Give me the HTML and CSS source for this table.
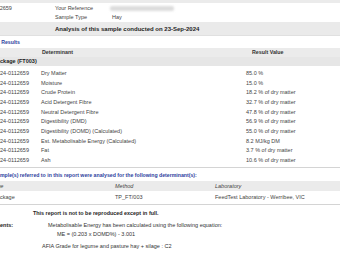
FILE: index.html
```html
<!DOCTYPE html>
<html lang="en">
<head>
<meta charset="utf-8">
<title>Analysis Report</title>
<link rel="stylesheet" href="styles.css">
</head>
<body>
<div class="page">
  <div class="topbar"></div>

  <div class="info">
    <div class="info-row">
      <span class="info-id">2024-0112659</span>
      <span class="info-label">Your Reference</span>
      <span class="info-value"><span class="redacted"></span></span>
    </div>
    <div class="info-row">
      <span class="info-id"></span>
      <span class="info-label">Sample Type</span>
      <span class="info-value">Hay</span>
    </div>
  </div>

  <div class="analysis-band">Analysis of this sample conducted on 23-Sep-2024</div>

  <div class="section-title"><span class="cut-test">Test Results</span></div>

  <table class="results">
    <thead>
      <tr class="head-row">
        <th class="col-id"></th>
        <th class="col-det">Determinant</th>
        <th class="col-val">Result Value</th>
      </tr>
    </thead>
    <tbody>
      <tr class="group-row"><td colspan="3"><span class="cut-pkg">Package (FT003)</span></td></tr>
      <tr><td class="col-id"><span class="cut-id">2024-0112659</span></td><td>Dry Matter</td><td>85.0 %</td></tr>
      <tr><td class="col-id"><span class="cut-id">2024-0112659</span></td><td>Moisture</td><td>15.0 %</td></tr>
      <tr><td class="col-id"><span class="cut-id">2024-0112659</span></td><td>Crude Protein</td><td>18.2 % of dry matter</td></tr>
      <tr><td class="col-id"><span class="cut-id">2024-0112659</span></td><td>Acid Detergent Fibre</td><td>32.7 % of dry matter</td></tr>
      <tr><td class="col-id"><span class="cut-id">2024-0112659</span></td><td>Neutral Detergent Fibre</td><td>47.8 % of dry matter</td></tr>
      <tr><td class="col-id"><span class="cut-id">2024-0112659</span></td><td>Digestibility (DMD)</td><td>56.9 % of dry matter</td></tr>
      <tr><td class="col-id"><span class="cut-id">2024-0112659</span></td><td>Digestibility (DOMD) (Calculated)</td><td>55.0 % of dry matter</td></tr>
      <tr><td class="col-id"><span class="cut-id">2024-0112659</span></td><td>Est. Metabolisable Energy (Calculated)</td><td>8.2 MJ/kg DM</td></tr>
      <tr><td class="col-id"><span class="cut-id">2024-0112659</span></td><td>Fat</td><td>3.7 % of dry matter</td></tr>
      <tr><td class="col-id"><span class="cut-id">2024-0112659</span></td><td>Ash</td><td>10.6 % of dry matter</td></tr>
    </tbody>
  </table>

  <div class="note-title"><span class="cut-sample">The sample(s) referred to in this report were analysed for the following determinant(s):</span></div>

  <table class="methods">
    <thead>
      <tr class="methods-head">
        <th class="m-pkg"><span class="cut-head">Package</span></th>
        <th class="m-method">Method</th>
        <th class="m-lab">Laboratory</th>
      </tr>
    </thead>
    <tbody>
      <tr class="methods-row">
        <td><span class="cut-pkg-row">Package</span></td>
        <td>TP_FT/003</td>
        <td>FeedTest Laboratory - Werribee, VIC</td>
      </tr>
    </tbody>
  </table>

  <div class="disclaimer">This report is not to be reproduced except in full.</div>

  <div class="comments">
    <div class="comments-label"><span class="cut-comments">Comments:</span></div>
    <div class="comments-body">
      <p>Metabolisable Energy has been calculated using the following equation:</p>
      <p class="equation">ME = (0.203 x DOMD%) - 3.001</p>
      <p class="grade">AFIA Grade for legume and pasture hay + silage : C2</p>
    </div>
  </div>
</div>
</body>
</html>
```

FILE: styles.css
```css
* { box-sizing: border-box; margin: 0; padding: 0; }

html, body { background: #ffffff; }

body {
  width: 340px;
  height: 255px;
  overflow: hidden;
  font-family: "Liberation Sans", Arial, sans-serif;
  font-size: 5.5px;
  color: #444444;
}

.page { width: 340px; }

.topbar { height: 3px; background: #ebebeb; }

.info { padding-top: 0.5px; }

.info-row {
  display: grid;
  grid-template-columns: 55px 57px 1fr;
  height: 9px;
  line-height: 9px;
  white-space: nowrap;
}

.info-id { text-indent: -23.2px; }

.redacted {
  display: inline-block;
  width: 64px;
  height: 5px;
  margin-left: -2px;
  vertical-align: middle;
  background: #dcdcdc;
  border-radius: 2px;
  filter: blur(1px);
}

.analysis-band {
  margin-top: 0.5px;
  height: 14px;
  line-height: 14px;
  padding-left: 55px;
  background: #eaeaea;
  border-bottom: 1px solid #e0e0e0;
  font-size: 6px;
  font-weight: bold;
  color: #1e1e1e;
  white-space: nowrap;
}

.section-title {
  height: 12px;
  line-height: 12px;
  font-size: 5.2px;
  font-weight: bold;
  color: #2d3e9e;
  white-space: nowrap;
}

.cut-test { margin-left: -10.5px; }

table { border-collapse: collapse; width: 340px; table-layout: fixed; }
th, td { padding: 0; text-align: left; white-space: nowrap; font-weight: normal; }

.results .col-id { width: 41px; }
.results .col-det { width: 205px; }

.head-row { background: #ebebeb; }
.head-row th { height: 9px; font-size: 5.3px; font-weight: bold; color: #333333; line-height: 9px; }
.head-row .col-det { padding-left: 1px; }
.head-row .col-val { padding-left: 6px; }

.group-row { background: #e6e6e6; }
.group-row td {
  height: 9px;
  line-height: 9px;
  font-weight: bold;
  color: #222222;
  border-bottom: 3px solid #ffffff;
}

.cut-pkg { margin-left: -6.7px; }
.cut-id { margin-left: -6.1px; }

.results tbody tr:not(.group-row) td { height: 9.67px; line-height: 9.67px; }

.note-title {
  margin-top: 1px;
  border-top: 1px solid #d4d4d4;
  height: 14px;
  line-height: 14px;
  font-size: 5.2px;
  font-weight: bold;
  color: #2d3e9e;
  white-space: nowrap;
}

.cut-sample { margin-left: -16.5px; }

.methods .m-pkg { width: 115px; }
.methods .m-method { width: 100px; }

.methods-head { background: #ebebeb; }
.methods-head th { height: 10px; line-height: 10px; font-style: italic; color: #444444; }
.cut-head { margin-left: -18px; }

.methods-row td {
  height: 14px;
  line-height: 13px;
  border-bottom: 1px solid #d4d4d4;
}
.cut-pkg-row { margin-left: -6.7px; }

.disclaimer {
  height: 16px;
  line-height: 16px;
  padding-left: 33px;
  font-size: 5.4px;
  font-weight: bold;
  color: #1e1e1e;
  white-space: nowrap;
}

.comments {
  display: grid;
  grid-template-columns: 48px 1fr;
  white-space: nowrap;
}

.comments-label {
  line-height: 9px;
  font-weight: bold;
  color: #1e1e1e;
}

.cut-comments { margin-left: -17.1px; }

.comments-body p { line-height: 9px; color: #333333; }
.comments-body .equation { padding-left: 9px; }
.comments-body .grade { margin-top: 3px; margin-left: -6px; }
```
